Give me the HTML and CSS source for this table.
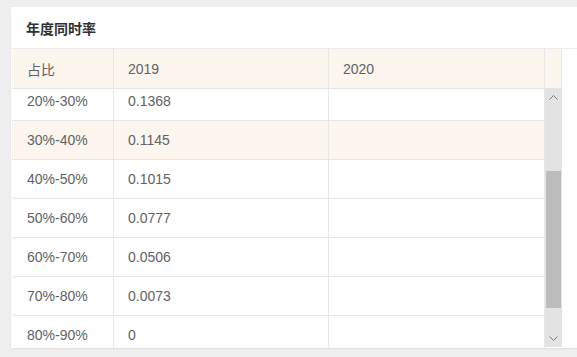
FILE: index.html
```html
<!DOCTYPE html>
<html lang="zh">
<head>
<meta charset="utf-8">
<title>年度同时率</title>
<link rel="stylesheet" href="styles.css">
</head>
<body>
<div class="card">
  <div class="card-head">年度同时率</div>
  <div class="table">
    <div class="thead">
      <div class="cell c1">占比</div>
      <div class="cell c2">2019</div>
      <div class="cell c3">2020</div>
      <div class="cell gutter"></div>
    </div>
    <div class="tbody">
      <div class="rows">
        <div class="row first"><div class="cell c1">20%-30%</div><div class="cell c2">0.1368</div><div class="cell c3"></div></div>
        <div class="row hl"><div class="cell c1">30%-40%</div><div class="cell c2">0.1145</div><div class="cell c3"></div></div>
        <div class="row"><div class="cell c1">40%-50%</div><div class="cell c2">0.1015</div><div class="cell c3"></div></div>
        <div class="row"><div class="cell c1">50%-60%</div><div class="cell c2">0.0777</div><div class="cell c3"></div></div>
        <div class="row"><div class="cell c1">60%-70%</div><div class="cell c2">0.0506</div><div class="cell c3"></div></div>
        <div class="row"><div class="cell c1">70%-80%</div><div class="cell c2">0.0073</div><div class="cell c3"></div></div>
        <div class="row"><div class="cell c1">80%-90%</div><div class="cell c2">0</div><div class="cell c3"></div></div>
      </div>
      <div class="scrollbar">
        <div class="sb-btn"><svg width="9" height="5" viewBox="0 0 9 5"><polyline points="0.5,4.5 4.5,0.5 8.5,4.5" fill="none" stroke="#7a7a7a" stroke-width="1"/></svg></div>
        <div class="sb-track"><div class="sb-thumb"></div></div>
        <div class="sb-btn"><svg width="9" height="5" viewBox="0 0 9 5"><polyline points="0.5,0.5 4.5,4.5 8.5,0.5" fill="none" stroke="#7a7a7a" stroke-width="1"/></svg></div>
      </div>
    </div>
  </div>
</div>
</body>
</html>
```

FILE: styles.css
```css
* { box-sizing: border-box; }
html, body { margin: 0; padding: 0; }
body {
  background: #efefef;
  padding: 7px 0 0 11px;
  font-family: "Liberation Sans", "Noto Sans CJK SC", sans-serif;
  font-size: 14px;
  color: #606266;
  overflow: hidden;
  height: 357px;
}
.card {
  background: #fff;
  width: 570px;
  height: 341px;
  overflow: hidden;
  box-shadow: 0 1px 2px rgba(0,0,0,0.08);
}
.card-head {
  height: 42px;
  border-bottom: 1px solid #ececec;
  padding-left: 15px;
  display: flex;
  align-items: center;
  font-weight: bold;
  font-size: 14px;
  color: #303133;
}
.table {
  margin-left: 1px;
  width: 550px;
}
.thead {
  display: grid;
  grid-template-columns: 102px 215px 216px 17px;
  height: 40px;
  background: #fdf6ee;
  border-bottom: 1px solid #e6e6e6;
}
.cell {
  display: flex;
  align-items: center;
  padding-left: 14px;
  border-right: 1px solid #e6e6e6;
  white-space: nowrap;
}
.cell.c1 { padding-left: 15px; }
.cell.gutter { padding: 0; }
.tbody {
  display: flex;
  height: 259px;
  overflow: hidden;
}
.rows {
  width: 533px;
  display: flex;
  flex-direction: column;
}
.row {
  display: grid;
  grid-template-columns: 102px 215px 216px;
  height: 39px;
  flex: none;
  border-bottom: 1px solid #e6e6e6;
}
.row.first { margin-top: -7px; }
.row.hl { background: #fdf6ee; }
.scrollbar {
  width: 17px;
  height: 258px;
  background: #e3e3e3;
  display: flex;
  flex-direction: column;
}
.sb-btn {
  height: 17px;
  flex: none;
  display: flex;
  align-items: center;
  justify-content: center;
}
.sb-track {
  flex: 1;
  padding: 65px 1px 0 1px;
}
.sb-thumb {
  height: 137px;
  background: #bcbcbc;
}
```
